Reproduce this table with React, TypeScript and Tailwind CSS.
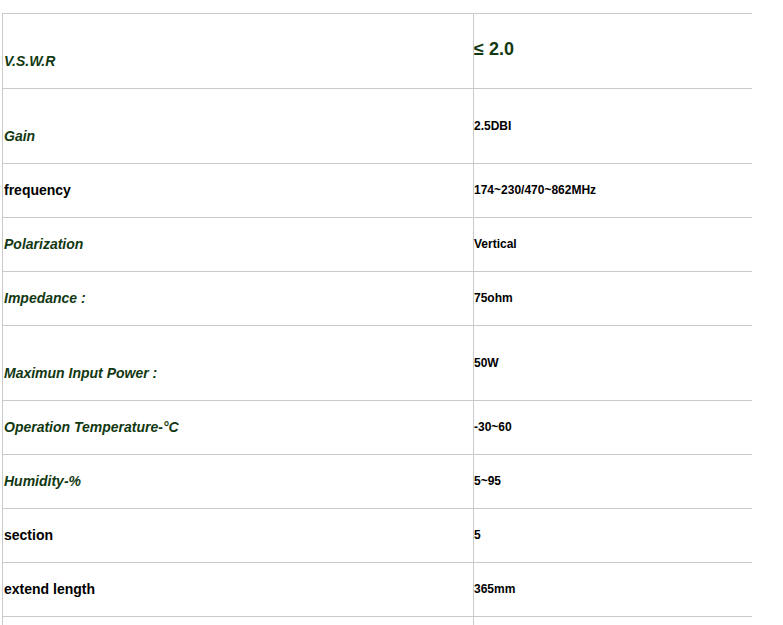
const GREEN = 'text-[#123812] italic';

type Spec = {
  label: string;
  value: string;
  tall?: boolean;
  plain?: boolean;
  big?: boolean;
};

const SPECS: Spec[] = [
  { label: 'V.S.W.R', value: '≤ 2.0', tall: true, big: true },
  { label: 'Gain', value: '2.5DBI', tall: true },
  { label: 'frequency', value: '174~230/470~862MHz', plain: true },
  { label: 'Polarization', value: 'Vertical' },
  { label: 'Impedance :', value: '75ohm' },
  { label: 'Maximun Input Power :', value: '50W', tall: true },
  { label: 'Operation Temperature-°C', value: '-30~60' },
  { label: 'Humidity-%', value: '5~95' },
  { label: 'section', value: '5', plain: true },
  { label: 'extend length', value: '365mm', plain: true },
  { label: '', value: '' },
];

function SpecRow({ spec }: { spec: Spec }) {
  const h = spec.tall ? 'h-[75px]' : 'h-[54px]';
  return (
    <div className={`flex border-t border-[#cacaca] ${h}`}>
      {/* Etiqueta */}
      <div className="w-[472px] shrink-0 border-l border-r border-[#cacaca] flex items-center pl-[1px] pb-[2px]">
        <span
          className={`text-[14px] font-bold leading-none ${spec.plain ? 'text-black' : GREEN} ${
            spec.tall ? 'pt-[22px]' : ''
          }`}
        >
          {spec.label}
        </span>
      </div>
      {/* Valor */}
      <div className="flex-1 flex items-center pb-[1px]">
        <span
          className={`font-bold leading-none ${
            spec.big ? 'text-[18px] text-[#123812] -mt-[3px]' : 'text-[12px] text-black'
          }`}
        >
          {spec.value}
        </span>
      </div>
    </div>
  );
}

export default function App() {
  return (
    <div
      className="w-[783px] h-[625px] overflow-hidden bg-white pt-[13px] pl-[2px]"
      style={{ fontFamily: '"Liberation Sans", Arial, sans-serif' }}
    >
      <div className="w-[750px]">
        {SPECS.map((s, i) => (
          <SpecRow key={i} spec={s} />
        ))}
      </div>
    </div>
  );
}
